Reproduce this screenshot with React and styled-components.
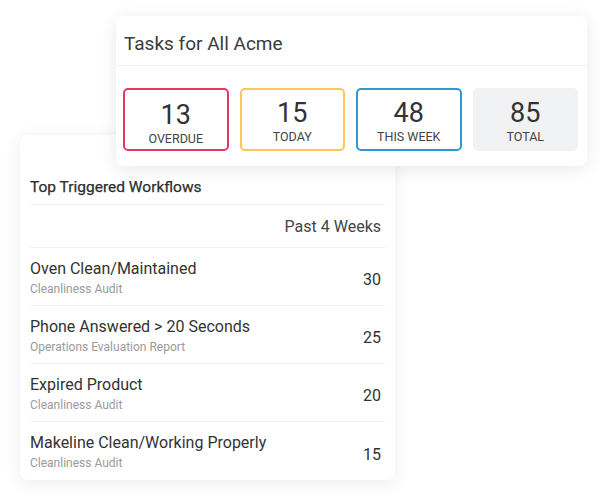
import React from 'react'
import styled, { createGlobalStyle } from 'styled-components'

const GlobalStyle = createGlobalStyle`
  body {
    margin: 0;
    background: #ffffff;
    font-family: Roboto, "Liberation Sans", sans-serif;
  }
`

const Canvas = styled.div`
  width: 600px;
  height: 502px;
  padding-top: 16px;
  box-sizing: border-box;
  overflow: hidden;
`

const TasksCard = styled.section`
  position: relative;
  z-index: 2;
  margin-left: 116px;
  width: 471px;
  height: 150px;
  background: #fff;
  border-radius: 8px;
  box-shadow: 0 3px 18px rgba(0, 0, 0, 0.09);
  box-sizing: border-box;
`

const TasksHeader = styled.h2`
  margin: 0;
  height: 50px;
  padding: 5px 8px 0;
  display: flex;
  align-items: center;
  box-sizing: border-box;
  border-bottom: 1px solid #f0f0f0;
  font-size: 19px;
  font-weight: 400;
  color: #3b3b3b;
`

const Counts = styled.div`
  display: flex;
  gap: 11px;
  padding: 22px 9px 0 7px;
`

const CountBox = styled.div`
  flex: 1;
  height: 63px;
  box-sizing: border-box;
  border-radius: 5px;
  border: 2px solid ${p => p.color || 'transparent'};
  background: ${p => (p.color ? '#fff' : '#f1f2f4')};
  display: flex;
  flex-direction: column;
  align-items: center;
  justify-content: center;
  padding-top: ${p => (p.low ? '8px' : '4px')};
`

const CountValue = styled.div`
  font-size: 27px;
  line-height: 28px;
  color: #333;
`

const CountLabel = styled.div`
  margin-top: 3px;
  font-size: 12.5px;
  line-height: 14px;
  color: #444;
  text-transform: uppercase;
`

const WorkflowCard = styled.section`
  position: relative;
  z-index: 1;
  margin: -31px 0 0 20px;
  width: 375px;
  background: #fff;
  border-radius: 8px;
  box-shadow: 0 3px 18px rgba(0, 0, 0, 0.08);
`

const WorkflowTitle = styled.h3`
  margin: 0 10px;
  height: 70px;
  padding-top: 43px;
  box-sizing: border-box;
  border-bottom: 1px solid #f0f0f0;
  font-size: 15.5px;
  font-weight: 400;
  color: #2e2e2e;
  -webkit-text-stroke: 0.25px #2e2e2e;
`

const PeriodRow = styled.div`
  margin: 0 10px;
  height: 42px;
  display: flex;
  align-items: center;
  justify-content: flex-end;
  padding-right: 4px;
  border-bottom: 1px solid #f0f0f0;
  font-size: 16px;
  color: #444;
`

const Row = styled.div`
  margin: 0 10px;
  height: 58px;
  box-sizing: border-box;
  display: flex;
  align-items: center;
  padding: 2px 4px 0 0;
  border-bottom: ${p => (p.last ? 'none' : '1px solid #f0f0f0')};
`

const RowText = styled.div`
  flex: 1;
`

const RowTitle = styled.div`
  font-size: 16px;
  line-height: 20px;
  color: #333;
`

const RowSub = styled.div`
  margin-top: 2px;
  font-size: 12px;
  line-height: 16px;
  color: #9a9a9a;
`

const RowCount = styled.div`
  font-size: 16px;
  color: #333;
  padding-top: 4px;
`

const counts = [
  { value: 13, label: 'Overdue', color: '#e53a60', low: true },
  { value: 15, label: 'Today', color: '#fbc65c' },
  { value: 48, label: 'This Week', color: '#2a9ad7' },
  { value: 85, label: 'Total' },
]

const workflows = [
  { title: 'Oven Clean/Maintained', source: 'Cleanliness Audit', count: 30 },
  { title: 'Phone Answered > 20 Seconds', source: 'Operations Evaluation Report', count: 25 },
  { title: 'Expired Product', source: 'Cleanliness Audit', count: 20 },
  { title: 'Makeline Clean/Working Properly', source: 'Cleanliness Audit', count: 15 },
]

export default function App() {
  return (
    <Canvas>
      <GlobalStyle />
      <TasksCard>
        <TasksHeader>Tasks for All Acme</TasksHeader>
        <Counts>
          {counts.map(c => (
            <CountBox key={c.label} color={c.color} low={c.low}>
              <CountValue>{c.value}</CountValue>
              <CountLabel>{c.label}</CountLabel>
            </CountBox>
          ))}
        </Counts>
      </TasksCard>
      <WorkflowCard>
        <WorkflowTitle>Top Triggered Workflows</WorkflowTitle>
        <PeriodRow>Past 4 Weeks</PeriodRow>
        {workflows.map((w, i) => (
          <Row key={w.title} last={i === workflows.length - 1}>
            <RowText>
              <RowTitle>{w.title}</RowTitle>
              <RowSub>{w.source}</RowSub>
            </RowText>
            <RowCount>{w.count}</RowCount>
          </Row>
        ))}
      </WorkflowCard>
    </Canvas>
  )
}
